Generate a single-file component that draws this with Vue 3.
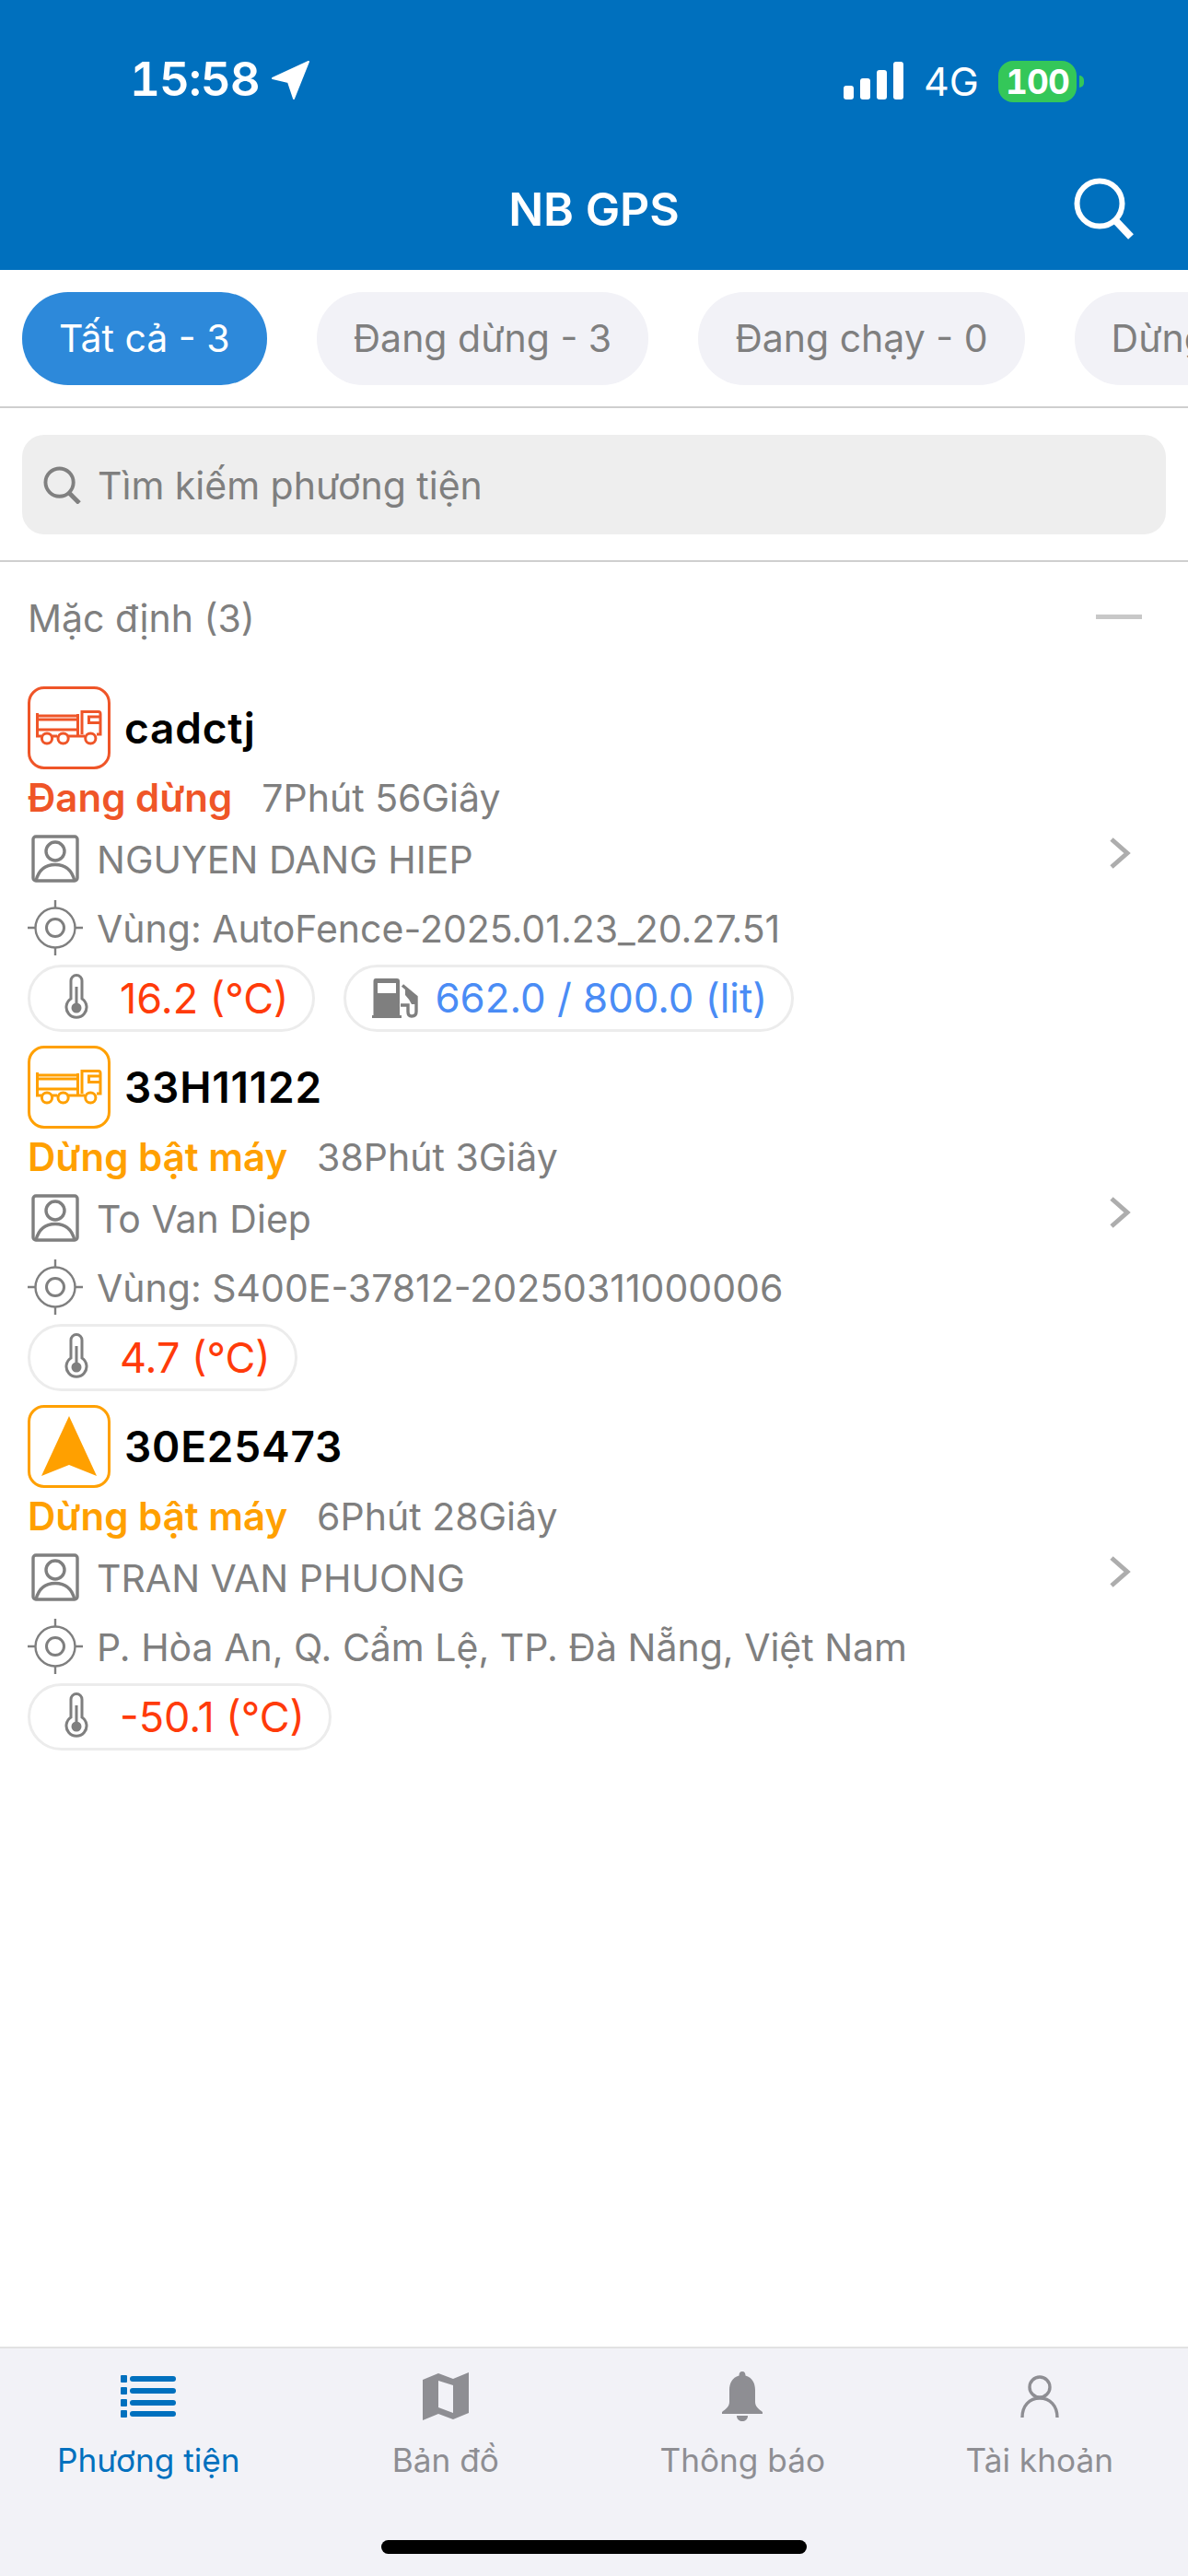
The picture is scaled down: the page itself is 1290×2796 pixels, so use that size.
<script setup>
const tabs = [
  { label: 'Tất cả - 3', active: true },
  { label: 'Đang dừng - 3' },
  { label: 'Đang chạy - 0' },
  { label: 'Dừng bật máy - 3' }
]

const vehicles = [
  {
    plate: 'cadctj',
    icon: 'truck',
    tone: 'stopped',
    status: 'Đang dừng',
    duration: '7Phút 56Giây',
    driver: 'NGUYEN DANG HIEP',
    zone: 'Vùng: AutoFence-2025.01.23_20.27.51',
    temp: '16.2 (°C)',
    fuel: '662.0 / 800.0 (lit)'
  },
  {
    plate: '33H11122',
    icon: 'truck',
    tone: 'idle',
    status: 'Dừng bật máy',
    duration: '38Phút 3Giây',
    driver: 'To Van Diep',
    zone: 'Vùng: S400E-37812-20250311000006',
    temp: '4.7 (°C)'
  },
  {
    plate: '30E25473',
    icon: 'arrow',
    tone: 'idle',
    status: 'Dừng bật máy',
    duration: '6Phút 28Giây',
    driver: 'TRAN VAN PHUONG',
    zone: 'P. Hòa An, Q. Cẩm Lệ, TP. Đà Nẵng, Việt Nam',
    temp: '-50.1 (°C)'
  }
]

const navItems = [
  { key: 'list', label: 'Phương tiện', active: true },
  { key: 'map', label: 'Bản đồ' },
  { key: 'bell', label: 'Thông báo' },
  { key: 'user', label: 'Tài khoản' }
]
</script>

<template>
  <div class="page">
    <header class="header">
      <div class="status-bar">
        <div class="status-left">
          <span class="clock">15:58</span>
          <svg class="loc" viewBox="0 0 42 42"><path d="M40 1 L24 41 L18 23 L1 19 Z" fill="#fff" stroke="#fff" stroke-width="2" stroke-linejoin="round" /></svg>
        </div>
        <div class="status-right">
          <div class="signal">
            <i class="b1" /><i class="b2" /><i class="b3" /><i class="b4" />
          </div>
          <span class="net">4G</span>
          <div class="battery"><span>100</span></div>
          <i class="battery-cap" />
        </div>
      </div>
      <div class="nav-row">
        <h1>NB GPS</h1>
        <svg class="nav-search" viewBox="0 0 66 68" fill="none" stroke="#fff">
          <circle cx="28" cy="28" r="24.5" stroke-width="6" />
          <path d="M45 46 L62 64" stroke-width="8" />
        </svg>
      </div>
    </header>

    <div class="tabs">
      <div v-for="tab in tabs" :key="tab.label" class="tab" :class="{ active: tab.active }">{{ tab.label }}</div>
    </div>

    <div class="search-wrap">
      <div class="search">
        <svg viewBox="0 0 42 42" fill="none" stroke="#808080">
          <circle cx="18" cy="18" r="15.5" stroke-width="4" />
          <path d="M29 30 L40 41" stroke-width="5" />
        </svg>
        <span>Tìm kiếm phương tiện</span>
      </div>
    </div>

    <main class="list">
      <div class="group-head">
        <span>Mặc định (3)</span>
        <i class="dash" />
      </div>

      <article v-for="v in vehicles" :key="v.plate" class="vehicle">
        <div class="vehicle-body">
          <div class="title-row">
            <div class="badge" :class="v.tone">
              <svg v-if="v.icon === 'truck'" viewBox="0 0 90 90" fill="none" stroke="currentColor" stroke-width="3">
                <path d="M10.5 29 V54 H15 M9 32 H54 M9 36 H54 M10.5 47 H54 M27 54 H32 M44 54 H62 M54.5 30 V53" />
                <path d="M59 52 V27.5 H77 Q79 27.5 79 30 V52 H75" />
                <path d="M78 33 H66.5 V39.5 H78" />
                <circle cx="21" cy="56.5" r="5.6" />
                <circle cx="38.6" cy="56.5" r="5.6" />
                <circle cx="68.3" cy="56.5" r="5.6" />
              </svg>
              <svg v-else viewBox="0 0 90 90">
                <path d="M45 12 L75 77 L45 65 L15 77 Z" fill="currentColor" />
              </svg>
            </div>
            <strong>{{ v.plate }}</strong>
          </div>

          <div class="status-row">
            <b :class="v.tone">{{ v.status }}</b>
            <span>{{ v.duration }}</span>
          </div>

          <div class="info-row driver">
            <span class="info-icon">
              <svg class="person" viewBox="0 0 52 52" fill="none" stroke="#7f7f7f" stroke-width="3.4">
                <rect x="2" y="2" width="48" height="48" rx="3" />
                <circle cx="26" cy="18" r="10" />
                <path d="M5 50 C8 38 16 32.5 26 32.5 S44 38 47 50" />
              </svg>
            </span>
            <span class="info-text">{{ v.driver }}</span>
          </div>

          <div class="info-row zone">
            <span class="info-icon">
              <svg class="target" viewBox="0 0 60 60" fill="none" stroke="#7f7f7f" stroke-width="2.4">
                <circle cx="30" cy="30" r="21.5" />
                <circle cx="30" cy="30" r="9.5" stroke-width="3" />
                <path d="M30 0 V8 M30 52 V60 M0 30 H8 M52 30 H60" />
              </svg>
            </span>
            <span class="info-text">{{ v.zone }}</span>
          </div>

          <div class="chips">
            <div class="chip temp">
              <svg class="thermo" viewBox="0 0 26 52" fill="none" stroke="#7f7f7f" stroke-width="3">
                <path d="M7 27 V7.5 a6 6 0 0 1 12 0 V27 a11 11 0 1 1 -12 0 Z" />
                <path d="M13 14 V36" stroke-width="3" />
                <circle cx="13" cy="37" r="5.5" fill="#7f7f7f" stroke="none" />
              </svg>
              <span>{{ v.temp }}</span>
            </div>
            <div v-if="v.fuel" class="chip fuel">
              <svg class="pump" viewBox="0 0 54 46">
                <path fill-rule="evenodd" fill="#7f7f7f" d="M6 2 H29 Q32 2 32 5 V42 H34 V45 H2 V42 H3.5 V5 Q3.5 2 6 2 Z M8 7 V18 H28 V7 Z" />
                <path d="M35 9.5 L50 22 V38 Q50 43 45 43 Q41 43 41 38 V31 H33" fill="none" stroke="#7f7f7f" stroke-width="3.4" />
                <path d="M38 12 L51 22 V30 H45 Q42 24 38 20 Z" fill="#7f7f7f" />
              </svg>
              <span>{{ v.fuel }}</span>
            </div>
          </div>
        </div>
        <svg class="chevron" viewBox="0 0 24 36" fill="none" stroke="#adadad" stroke-width="5">
          <path d="M3 3 L20 18 L3 33" />
        </svg>
      </article>
    </main>

    <nav class="tabbar">
      <div class="tabbar-items">
        <div v-for="item in navItems" :key="item.key" class="nav-item" :class="{ active: item.active }">
          <span class="nav-icon">
            <svg v-if="item.key === 'list'" viewBox="0 0 60 46" width="60" height="46" fill="currentColor">
              <rect y="0" width="7" height="8" rx="1" /><rect x="10" y="1" width="50" height="6" rx="3" />
              <rect y="13" width="7" height="8" rx="1" /><rect x="10" y="14" width="50" height="6" rx="3" />
              <rect y="26" width="7" height="8" rx="1" /><rect x="10" y="27" width="50" height="6" rx="3" />
              <rect y="38" width="7" height="8" rx="1" /><rect x="10" y="39" width="50" height="6" rx="3" />
            </svg>
            <svg v-else-if="item.key === 'map'" viewBox="0 0 50 52" width="50" height="52" fill="currentColor">
              <path fill-rule="evenodd" d="M0 8 L17 1 L33 7 L50 0 V44 L33 51 L17 45 L0 52 Z M17 9 V38 L33 44 V14 Z" />
            </svg>
            <svg v-else-if="item.key === 'bell'" viewBox="0 0 44 54" width="44" height="54" fill="currentColor">
              <path d="M22 0 C24.5 0 25.5 2 25.5 4.5 C33 6.5 36 13 36 20 V33 C36 38 40 41 44 44 V46 H0 V44 C4 41 8 38 8 33 V20 C8 13 11 6.5 18.5 4.5 C18.5 2 19.5 0 22 0 Z" />
              <path d="M16 48 H28 C28 52 25 54 22 54 C19 54 16 52 16 48 Z" />
            </svg>
            <svg v-else viewBox="0 0 42 46" width="42" height="46" fill="none" stroke="currentColor" stroke-width="3.4">
              <circle cx="21" cy="13" r="11" />
              <path d="M2 46 C2 33 10 25 21 25 C32 25 40 33 40 46" />
            </svg>
          </span>
          <span class="nav-label">{{ item.label }}</span>
        </div>
      </div>
      <i class="home-bar" />
    </nav>
  </div>
</template>

<style scoped>
.page {
  width: 1290px;
  height: 2796px;
  display: flex;
  flex-direction: column;
  overflow: hidden;
  background: #fff;
  font-family: Inter, "Noto Sans", sans-serif;
  color: #7f7f7f;
}

.header {
  height: 293px;
  flex-shrink: 0;
  background: #0070be;
  color: #fff;
}

.status-bar {
  height: 176px;
  display: flex;
  align-items: center;
  justify-content: space-between;
  padding: 0 113px 0 141px;
}

.status-left {
  display: flex;
  align-items: center;
  gap: 13px;
}

.clock {
  font-size: 51px;
  font-weight: 600;
  font-variant-numeric: tabular-nums;
  letter-spacing: -1px;
  margin-top: -5px;
}

.loc {
  width: 42px;
  height: 42px;
  margin-top: -3px;
}

.status-right {
  display: flex;
  align-items: center;
}

.signal {
  display: flex;
  align-items: flex-end;
  gap: 7px;
  height: 41px;
  margin-top: -2px;
}

.signal i {
  width: 11px;
  border-radius: 3px;
  background: #fff;
}

.signal .b1 { height: 15px; }
.signal .b2 { height: 23px; }
.signal .b3 { height: 32px; }
.signal .b4 { height: 41px; }

.net {
  margin-left: 22px;
  font-size: 43px;
  font-weight: 400;
  width: 81px;
}

.battery {
  width: 85px;
  height: 45px;
  border-radius: 16px;
  background: #34c759;
  display: flex;
  align-items: center;
  justify-content: center;
  font-size: 37px;
  font-weight: 700;
  font-variant-numeric: tabular-nums;
  letter-spacing: -1px;
}

.battery-cap {
  width: 5px;
  height: 13px;
  margin-left: 3px;
  border-radius: 0 6px 6px 0;
  background: #34c759;
}

.nav-row {
  height: 102px;
  display: flex;
  align-items: center;
  justify-content: center;
  position: relative;
}

h1 {
  margin: 0;
  font-size: 50px;
  font-weight: 600;
}

.nav-search {
  position: absolute;
  right: 58px;
  top: 17px;
  width: 66px;
  height: 68px;
}

.tabs {
  height: 150px;
  flex-shrink: 0;
  box-sizing: border-box;
  display: flex;
  gap: 54px;
  padding: 24px 0 0 24px;
  overflow: hidden;
  border-bottom: 2px solid #cfcfcf;
}

.tab {
  flex-shrink: 0;
  height: 101px;
  padding: 0 40px;
  box-sizing: border-box;
  border-radius: 50px;
  background: #f2f2f7;
  font-size: 41px;
  line-height: 101px;
  white-space: nowrap;
}

.tab.active {
  background: #2d89da;
  color: #fff;
}

.search-wrap {
  height: 167px;
  flex-shrink: 0;
  box-sizing: border-box;
  padding: 29px 24px 0;
  border-bottom: 2px solid #cfcfcf;
}

.search {
  height: 108px;
  display: flex;
  align-items: center;
  gap: 18px;
  padding-left: 23px;
  border-radius: 24px;
  background: #eee;
  font-size: 41px;
}

.search span {
  padding-top: 2px;
}

.search svg {
  width: 41px;
  height: 41px;
}

.list {
  flex: 1;
}

.group-head {
  height: 122px;
  margin-bottom: 13px;
  display: flex;
  align-items: center;
  justify-content: space-between;
  padding: 0 50px 0 30px;
  font-size: 41px;
}

.dash {
  width: 50px;
  height: 5px;
  background: #c8c8c8;
  margin-top: -3px;
}

.vehicle {
  height: 390px;
  display: flex;
  align-items: center;
  justify-content: space-between;
  padding: 0 62px 0 30px;
  box-sizing: border-box;
}

.vehicle-body {
  flex: 1;
  padding-bottom: 16px;
}

.title-row {
  height: 90px;
  display: flex;
  align-items: center;
  gap: 15px;
}

.badge {
  width: 90px;
  height: 90px;
  box-sizing: border-box;
  border: 3px solid currentColor;
  border-radius: 18px;
}

.badge svg {
  display: block;
  width: 90px;
  height: 90px;
  margin: -3px;
}

.stopped { color: #ef5528; }
.idle { color: #ffa000; }

.title-row strong {
  font-size: 46px;
  font-weight: 600;
  letter-spacing: 0.8px;
  color: #000;
}

.status-row {
  height: 62px;
  display: flex;
  align-items: center;
  gap: 32px;
  font-size: 41px;
}

.status-row b {
  font-size: 42px;
  font-weight: 600;
}

.info-row {
  display: flex;
  align-items: center;
  font-size: 41px;
  white-space: nowrap;
}

.info-text {
  padding-top: 2px;
}

.driver { height: 70px; }
.zone { height: 80px; }

.info-icon {
  width: 75px;
  flex-shrink: 0;
  display: flex;
  justify-content: center;
  padding-right: 15px;
  box-sizing: border-box;
}

.person {
  width: 52px;
  height: 52px;
  display: block;
}

.target {
  width: 60px;
  height: 60px;
  display: block;
}

.chips {
  display: flex;
  gap: 31px;
}

.chip {
  height: 73px;
  box-sizing: border-box;
  border: 3px solid #ececec;
  border-radius: 37px;
  display: flex;
  align-items: center;
  font-size: 45px;
}

.chip.temp {
  color: #ff3b0a;
  padding: 0 26px 0 37px;
  gap: 34px;
}

.chip.fuel {
  color: #4a8cf5;
  font-size: 43.8px;
  padding: 0 26px 0 26px;
  gap: 16px;
}

.thermo {
  width: 26px;
  height: 52px;
}

.pump {
  width: 54px;
  height: 46px;
}

.chevron {
  width: 24px;
  height: 36px;
  margin-bottom: 28px;
}

.tabbar {
  height: 249px;
  flex-shrink: 0;
  box-sizing: border-box;
  background: #f2f2f7;
  border-top: 2px solid #e2e2e2;
  display: flex;
  flex-direction: column;
  align-items: center;
}

.tabbar-items {
  width: 100%;
  display: grid;
  grid-template-columns: repeat(4, 1fr);
  padding-top: 24px;
  height: 208px;
  box-sizing: border-box;
}

.nav-item {
  display: flex;
  flex-direction: column;
  align-items: center;
  color: #8e8e93;
}

.nav-item.active {
  color: #0070be;
}

.nav-icon {
  height: 56px;
  display: flex;
  align-items: center;
  justify-content: center;
}

.nav-label {
  margin-top: 20px;
  font-size: 35.2px;
}

.home-bar {
  width: 462px;
  height: 15px;
  border-radius: 8px;
  background: #000;
}
</style>

<style>
html,
body {
  margin: 0;
  background: #fff;
}
</style>
